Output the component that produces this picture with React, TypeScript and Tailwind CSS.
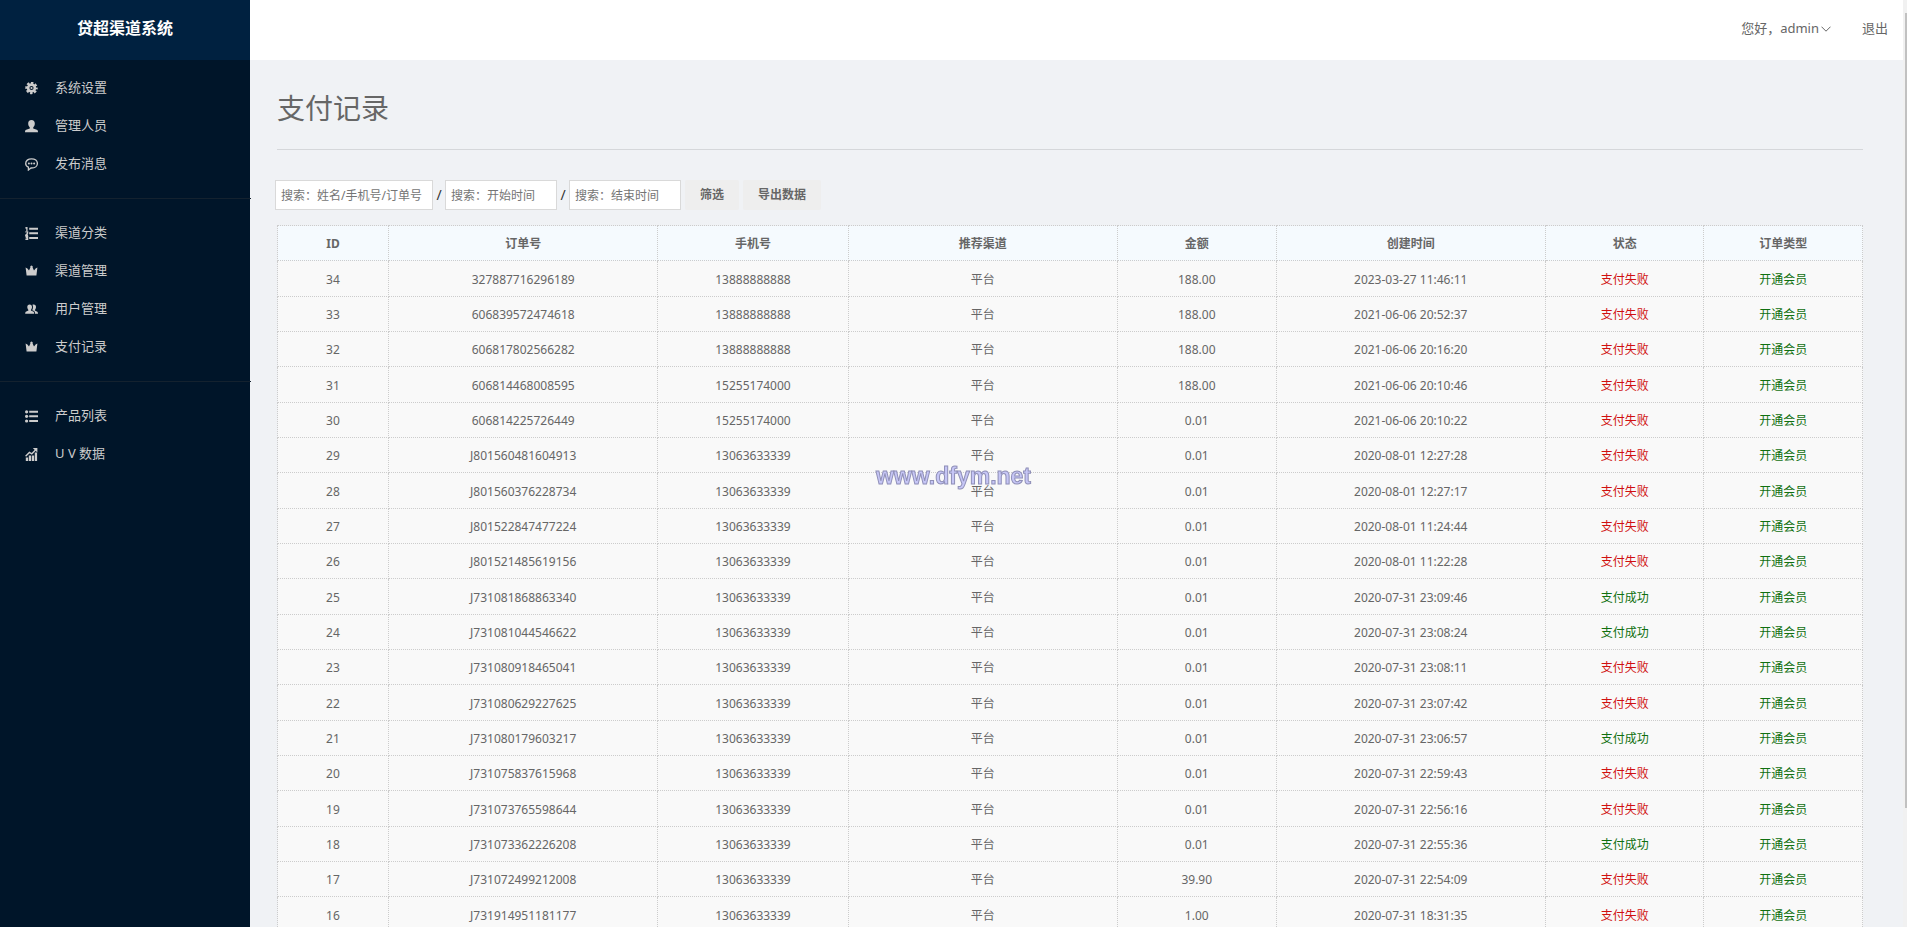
import { ReactNode } from "react";

const icons: Record<string, ReactNode> = {
  gear: (
    <>
      <circle cx="6.5" cy="6" r="3.4" fill="none" stroke="currentColor" strokeWidth="2.6" />
      <circle
        cx="6.5"
        cy="6"
        r="5.1"
        fill="none"
        stroke="currentColor"
        strokeWidth="2.2"
        strokeDasharray="2.4 1.605"
        strokeDashoffset="1.2"
      />
      <circle cx="6.5" cy="6" r="1.1" />
    </>
  ),
  person: (
    <path d="M6.5 0C8.7 0 9.8 1.4 9.8 3.6C9.8 5.2 9.2 6.6 8.2 7.4V8.4L11.8 9.7C12.6 10 13 10.6 13 12.2H0C0 10.6 0.4 10 1.2 9.7L4.8 8.4V7.4C3.8 6.6 3.2 5.2 3.2 3.6C3.2 1.4 4.3 0 6.5 0Z" />
  ),
  chat: (
    <>
      <path
        d="M6.5 0.8C10 0.8 12.4 2.8 12.4 5.4C12.4 8 10 10 6.5 10H6L3.4 12V9.2C1.6 8.4 0.7 7 0.7 5.4C0.7 2.8 3.1 0.8 6.5 0.8Z"
        fill="none"
        stroke="currentColor"
        strokeWidth="1.3"
      />
      <circle cx="3.9" cy="5.4" r="1" />
      <circle cx="6.5" cy="5.4" r="1" />
      <circle cx="9.1" cy="5.4" r="1" />
    </>
  ),
  ordered: (
    <>
      <path d="M4.2 0.8H13V2.8H4.2ZM4.2 5.3H13V7.3H4.2ZM4.2 10H13V12H4.2Z" />
      <path
        d="M0.4 1L1.9 0.6V3.9M0.4 4.9H2.6V6.3L0.8 8.2H3M0.4 9.5H2.6V12.4H0.4M0.8 10.9H2.6"
        fill="none"
        stroke="currentColor"
        strokeWidth="1.3"
      />
    </>
  ),
  crown: (
    <path d="M0.6 2.6L2.4 3.4L4 5.6L5.4 2.6A1.3 1.3 0 1 1 7.6 2.6L9 5.6L10.6 3.4L12.4 2.6L11.4 10.4H1.6Z" />
  ),
  users: (
    <>
      <path d="M4.6 1.4C6.2 1.4 7 2.5 7 4.1C7 5.3 6.6 6.3 5.9 6.9V7.5L8.1 8.4C8.9 8.7 9.2 9.3 9.2 10.8H0.2C0.2 9.3 0.5 8.7 1.3 8.4L3.4 7.5V6.9C2.7 6.3 2.3 5.3 2.3 4.1C2.3 2.5 3.1 1.4 4.6 1.4Z" />
      <path d="M7.4 1.8C7.8 1.5 8.2 1.4 8.7 1.4C10.2 1.4 11 2.5 11 4.1C11 5.3 10.6 6.3 9.9 6.9V7.5L11.8 8.4C12.6 8.7 13 9.3 13 10.8H10C10 9 9.6 8.2 8.6 7.8L7.2 7.2C7.7 6.3 8 5.3 8 4.1C8 3.2 7.8 2.4 7.4 1.8Z" />
    </>
  ),
  list: (
    <>
      <path d="M4.2 0.8H13V2.8H4.2ZM4.2 5.3H13V7.3H4.2ZM4.2 10H13V12H4.2Z" />
      <circle cx="1.6" cy="1.8" r="1.6" />
      <circle cx="1.6" cy="6.3" r="1.6" />
      <circle cx="1.6" cy="11" r="1.6" />
    </>
  ),
  chart: (
    <>
      <path d="M0.8 9.6H3.1V13H0.8ZM3.8 7.4H6.1V13H3.8ZM6.8 7.6H9.1V13H6.8ZM9.8 4.6H12.1V13H9.8Z" />
      <path d="M0.6 8.2L4.4 4.4L6.8 5.8L11 1.6" fill="none" stroke="currentColor" strokeWidth="1.4" />
      <path d="M7.8 0H12.4V4.6Z" />
    </>
  ),
};

const menu = [
  [
    { icon: "gear", label: "系统设置" },
    { icon: "person", label: "管理人员" },
    { icon: "chat", label: "发布消息" },
  ],
  [
    { icon: "ordered", label: "渠道分类" },
    { icon: "crown", label: "渠道管理" },
    { icon: "users", label: "用户管理" },
    { icon: "crown", label: "支付记录" },
  ],
  [
    { icon: "list", label: "产品列表" },
    { icon: "chart", label: "U V 数据" },
  ],
];

const columns = [
  { title: "ID", width: "w-[7%]" },
  { title: "订单号", width: "w-[17%]" },
  { title: "手机号", width: "w-[12%]" },
  { title: "推荐渠道", width: "w-[17%]" },
  { title: "金额", width: "w-[10%]" },
  { title: "创建时间", width: "w-[17%]" },
  { title: "状态", width: "w-[10%]" },
  { title: "订单类型", width: "w-[10%]" },
];

// id, order number, phone, amount, created at, paid
const records: [number, string, string, string, string, boolean][] = [
  [34, "327887716296189", "13888888888", "188.00", "2023-03-27 11:46:11", false],
  [33, "606839572474618", "13888888888", "188.00", "2021-06-06 20:52:37", false],
  [32, "606817802566282", "13888888888", "188.00", "2021-06-06 20:16:20", false],
  [31, "606814468008595", "15255174000", "188.00", "2021-06-06 20:10:46", false],
  [30, "606814225726449", "15255174000", "0.01", "2021-06-06 20:10:22", false],
  [29, "J801560481604913", "13063633339", "0.01", "2020-08-01 12:27:28", false],
  [28, "J801560376228734", "13063633339", "0.01", "2020-08-01 12:27:17", false],
  [27, "J801522847477224", "13063633339", "0.01", "2020-08-01 11:24:44", false],
  [26, "J801521485619156", "13063633339", "0.01", "2020-08-01 11:22:28", false],
  [25, "J731081868863340", "13063633339", "0.01", "2020-07-31 23:09:46", true],
  [24, "J731081044546622", "13063633339", "0.01", "2020-07-31 23:08:24", true],
  [23, "J731080918465041", "13063633339", "0.01", "2020-07-31 23:08:11", false],
  [22, "J731080629227625", "13063633339", "0.01", "2020-07-31 23:07:42", false],
  [21, "J731080179603217", "13063633339", "0.01", "2020-07-31 23:06:57", true],
  [20, "J731075837615968", "13063633339", "0.01", "2020-07-31 22:59:43", false],
  [19, "J731073765598644", "13063633339", "0.01", "2020-07-31 22:56:16", false],
  [18, "J731073362226208", "13063633339", "0.01", "2020-07-31 22:55:36", true],
  [17, "J731072499212008", "13063633339", "39.90", "2020-07-31 22:54:09", false],
  [16, "J731914951181177", "13063633339", "1.00", "2020-07-31 18:31:35", false],
];

const Sidebar = () => {
  return (
    <aside className="w-[250px] shrink-0 bg-[#001529]">
      <div className="h-[60px] pb-1 flex items-center justify-center bg-[#002140] text-white text-base font-bold">
        贷超渠道系统
      </div>
      <nav className="-mt-1.5">
        {menu.map((group, i) => (
          <ul
            key={i}
            className="py-[15px] -mr-px border-b border-[#14222f] last:border-b-0"
          >
            {group.map((item) => (
              <li key={item.label}>
                <a
                  href="#"
                  className="flex items-center h-[38px] pl-[25px] gap-[17px] text-[13px] text-[#ccc]"
                >
                  <svg viewBox="0 0 13 13" className="w-[13px] h-[13px]" fill="currentColor">
                    {icons[item.icon]}
                  </svg>
                  <span>{item.label}</span>
                </a>
              </li>
            ))}
          </ul>
        ))}
      </nav>
    </aside>
  );
};

const Header = () => {
  return (
    <header className="flex items-center justify-end gap-[31px] h-[60px] shrink-0 pb-0.5 pr-[15px] bg-white text-[13px] text-[#666]">
      <button className="flex items-center gap-0.5">
        <span>您好，admin</span>
        <svg viewBox="0 0 10 6" className="w-2.5 h-1.5" fill="none" stroke="currentColor">
          <path d="M0.5 0.7L5 5.2L9.5 0.7" />
        </svg>
      </button>
      <a href="#">退出</a>
    </header>
  );
};

const Filters = () => {
  const field =
    "h-[30px] px-[5px] border border-[#d9d9d9] bg-white text-xs placeholder:text-[#757575]";
  const button = "h-[30px] px-[15px] ml-1 rounded-xs bg-[#eee] text-xs font-bold text-[#666]";

  return (
    <form className="flex items-center text-sm text-[#333]">
      <input
        className={`${field} w-[158px]`}
        aria-label="姓名/手机号/订单号"
        placeholder="搜索：姓名/手机号/订单号"
      />
      <span className="w-3 text-center">/</span>
      <input className={`${field} w-28`} aria-label="开始时间" placeholder="搜索：开始时间" />
      <span className="w-3 text-center">/</span>
      <input className={`${field} w-28`} aria-label="结束时间" placeholder="搜索：结束时间" />
      <button type="button" className={button}>
        筛选
      </button>
      <button type="button" className={button}>
        导出数据
      </button>
    </form>
  );
};

const RecordTable = () => {
  const cell = "border border-dotted border-[#ccc] p-0 pt-0.5";

  return (
    <table className="w-full table-fixed border-collapse text-center text-xs text-[#666]">
      <colgroup>
        {columns.map((col) => (
          <col key={col.title} className={col.width} />
        ))}
      </colgroup>
      <thead>
        <tr className="h-[35px] bg-[#f5fafe]">
          {columns.map((col) => (
            <th key={col.title} className={`${cell} font-bold`}>
              {col.title}
            </th>
          ))}
        </tr>
      </thead>
      <tbody>
        {records.map(([id, order, phone, amount, time, paid]) => (
          <tr key={id} className="h-[35px] nth-[3n+1]:h-9 bg-[#f9f9f9]">
            <td className={cell}>{id}</td>
            <td className={cell}>{order}</td>
            <td className={cell}>{phone}</td>
            <td className={cell}>平台</td>
            <td className={cell}>{amount}</td>
            <td className={cell}>{time}</td>
            <td className={`${cell} ${paid ? "text-[#107010]" : "text-[#d01010]"}`}>
              {paid ? "支付成功" : "支付失败"}
            </td>
            <td className={`${cell} text-[#107010]`}>开通会员</td>
          </tr>
        ))}
      </tbody>
    </table>
  );
};

const App = () => {
  return (
    <div className="flex h-screen overflow-hidden bg-[#f0f2f5] font-['Noto_Sans','Noto_Sans_CJK_SC',sans-serif]">
      <Sidebar />
      <div className="flex flex-col flex-1 min-w-0">
        <Header />
        <main className="flex-1 overflow-hidden pl-[25px] pr-[38px]">
          <h1 className="mx-0.5 pt-7 pb-5 border-b border-[#d5d7da] text-[28px] leading-[41px] text-[#666]">
            支付记录
          </h1>
          <div className="pt-[30px] pb-[15px]">
            <Filters />
          </div>
          <div className="mx-0.5">
            <RecordTable />
          </div>
        </main>
      </div>
      {/* slim scroll track */}
      <div className="flex flex-col w-1 shrink-0 pt-[13px] pl-0.5 bg-[#f1f1f1]">
        <div className="h-[87%] bg-[#c1c1c1]"></div>
      </div>
      <div className="fixed top-1/2 left-1/2 -translate-x-1/2 pointer-events-none font-['Liberation_Sans',sans-serif] font-bold text-[23px] leading-6 text-[#c6c6f6] [-webkit-text-stroke:1px_#9090b8]">
        www.dfym.net
      </div>
    </div>
  );
};

export default App;
